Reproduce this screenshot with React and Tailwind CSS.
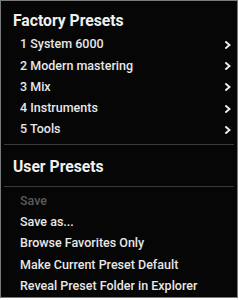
import React from "react";

const Chevron = () => (
  <svg width="6" height="8" viewBox="0 0 6 8" className="shrink-0">
    <path d="M1 1 L4.5 4 L1 7" fill="none" stroke="#ececec" strokeWidth="1.9" strokeLinecap="square" strokeLinejoin="miter" />
  </svg>
);

const factory = ["1 System 6000", "2 Modern mastering", "3 Mix", "4 Instruments", "5 Tools"];
const user = [
  { t: "Save", dim: true },
  { t: "Save as..." },
  { t: "Browse Favorites Only" },
  { t: "Make Current Preset Default" },
  { t: "Reveal Preset Folder in Explorer" },
];

export default function App() {
  return (
    <div className="w-[239px] h-[300px] bg-white" style={{ fontFamily: "Roboto, 'Liberation Sans', sans-serif" }}>
      <div className="w-[238px] h-[298px] border border-[#7a7a7a] bg-[#060606] flex flex-col">
        <div className="h-[20px] mt-[10px] pl-[12px] text-[15.7px] leading-[20px] font-bold text-[#f0f0f0]">Factory Presets</div>
        <div className="mt-[3px] flex flex-col">
          {factory.map((f) => (
            <div key={f} className="h-[21.3px] flex items-center justify-between pl-[19px] pr-[6px] text-[12.5px] font-medium text-[#e8e8e8]">
              <span>{f}</span>
              <Chevron />
            </div>
          ))}
        </div>
        <div className="mt-[4px] mx-[3px] h-px bg-[#3a3a3a]" />
        <div className="h-[20px] mt-[12px] pl-[12px] text-[15.7px] leading-[20px] font-bold text-[#f0f0f0]">User Presets</div>
        <div className="mt-[9px] mx-[3px] h-px bg-[#3a3a3a]" />
        <div className="mt-[3px] flex flex-col">
          {user.map((u) => (
            <div key={u.t} className={`h-[21.3px] flex items-center pl-[19px] text-[12.5px] font-medium ${u.dim ? "text-[#5a5a5a]" : "text-[#e8e8e8]"}`}>
              {u.t}
            </div>
          ))}
        </div>
      </div>
    </div>
  );
}
